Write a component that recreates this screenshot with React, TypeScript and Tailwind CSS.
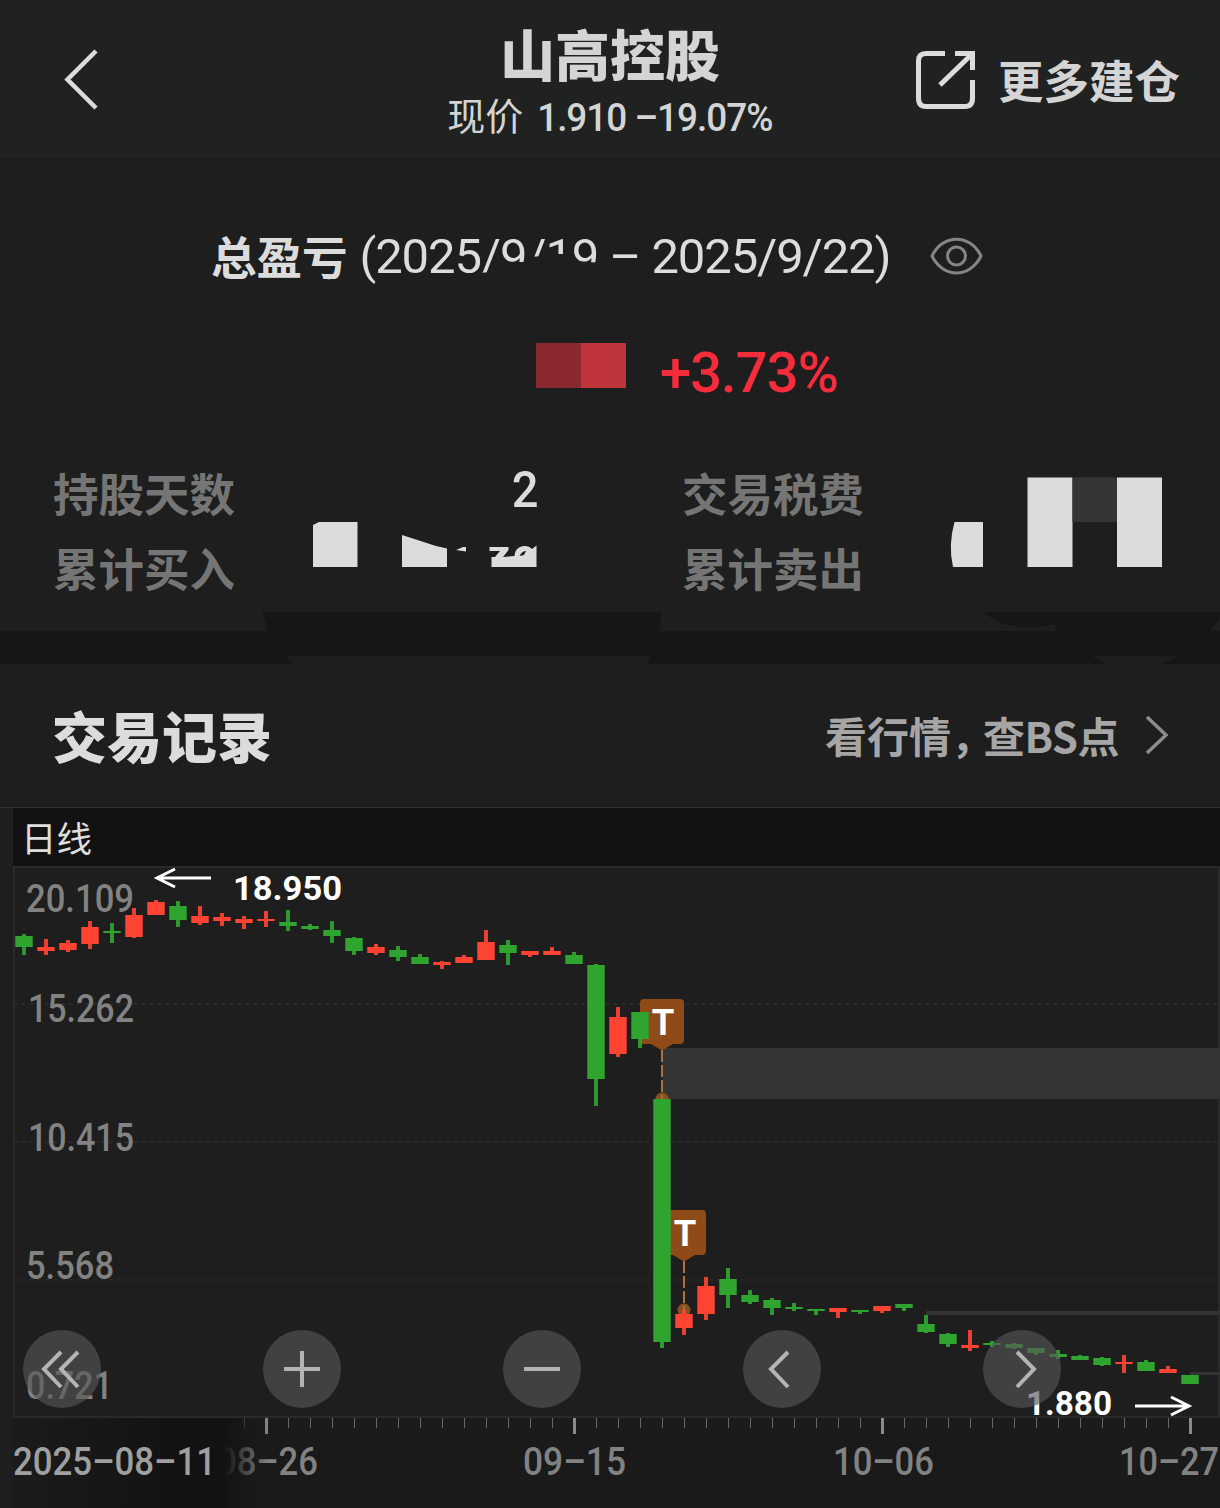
import React from 'react';

type Candle = {
  up: boolean;
  open: number;
  close: number;
  high: number;
  low: number;
};

const STEP = 22;
const FIRST_X = 24;

// [up, body top, body bottom, wick top, wick bottom] in chart pixels
const RAW: [number, number, number, number, number][] = [
  [0, 936, 947, 934, 955],
  [1, 947, 951, 939, 955],
  [1, 943, 950, 940, 952],
  [1, 927, 944, 921, 949],
  [0, 931, 933, 923, 943],
  [1, 915, 937, 908, 938],
  [1, 902, 915, 900, 915],
  [0, 906, 920, 901, 927],
  [1, 916, 923, 906, 925],
  [1, 917, 921, 913, 926],
  [1, 919, 923, 916, 929],
  [1, 919, 921, 911, 927],
  [0, 922, 926, 910, 931],
  [0, 926, 929, 924, 930],
  [0, 930, 936, 921, 943],
  [0, 938, 951, 937, 955],
  [1, 947, 953, 944, 955],
  [0, 950, 957, 946, 961],
  [0, 957, 964, 954, 964],
  [1, 962, 965, 961, 969],
  [1, 957, 963, 955, 963],
  [1, 942, 960, 930, 960],
  [0, 945, 953, 940, 965],
  [1, 951, 955, 951, 957],
  [1, 951, 955, 947, 955],
  [0, 955, 964, 952, 964],
  [0, 965, 1079, 964, 1106],
  [1, 1017, 1054, 1007, 1057],
  [0, 1012, 1039, 1012, 1048],
  [0, 1099, 1342, 1099, 1348],
  [1, 1314, 1328, 1310, 1335],
  [1, 1286, 1314, 1277, 1320],
  [0, 1279, 1295, 1268, 1308],
  [0, 1295, 1302, 1290, 1304],
  [0, 1300, 1308, 1298, 1315],
  [0, 1307, 1309, 1303, 1311],
  [0, 1309, 1311, 1309, 1315],
  [1, 1308, 1312, 1308, 1318],
  [0, 1310, 1312, 1310, 1314],
  [1, 1306, 1311, 1306, 1313],
  [0, 1304, 1308, 1304, 1311],
  [0, 1324, 1332, 1315, 1333],
  [0, 1334, 1344, 1333, 1347],
  [1, 1345, 1348, 1330, 1351],
  [0, 1343, 1345, 1341, 1347],
  [0, 1344, 1348, 1343, 1349],
  [0, 1348, 1353, 1348, 1355],
  [0, 1354, 1357, 1350, 1359],
  [0, 1356, 1360, 1355, 1360],
  [0, 1358, 1365, 1357, 1366],
  [1, 1362, 1364, 1355, 1373],
  [0, 1362, 1371, 1360, 1371],
  [1, 1369, 1373, 1366, 1373],
  [0, 1375, 1384, 1375, 1384],
];

const candles: Candle[] = RAW.map(([up, open, close, high, low]) => ({ up: up === 1, open, close, high, low }));

const priceLabels = [
  { text: '20.109', x: 26, y: 912, w: 108 },
  { text: '15.262', x: 28, y: 1022, w: 106 },
  { text: '10.415', x: 28, y: 1151, w: 106 },
  { text: '5.568', x: 26, y: 1279, w: 88 },
  { text: '0.721', x: 26, y: 1399, w: 87 },
];

const dateLabels = [
  { text: '08–26', x: 217, w: 101 },
  { text: '09–15', x: 523, w: 103 },
  { text: '10–06', x: 833, w: 101 },
  { text: '10–27', x: 1119, w: 100 },
];

const ticks = Array.from({ length: 44 }, (_, i) => i + 10);

function Marker({ x, y, dotY }: { x: number; y: number; dotY: number }) {
  return (
    <g>
      <rect x={x - 22} y={y} width="44" height="45" rx="4" fill="#8f4b17" />
      <path d={`M${x - 12} ${y + 44.5}h24l-12 7z`} fill="#8f4b17" />
      <circle cx={x} cy={dotY} r="6.5" fill="#8b5020" />
      <path d={`M${x} ${y + 51}V${dotY}`} stroke="#ab7040" strokeWidth="2" strokeDasharray="12 3" />
      <text x={x + 1} y={y + 36} textAnchor="middle" fontSize="36" fontWeight="700" fill="#fff" fontFamily="'Liberation Sans', sans-serif">T</text>
    </g>
  );
}

function Chart() {
  return (
    <svg className="block h-[700px] w-full" viewBox="0 808 1220 700" fontFamily="Roboto, sans-serif">
      <defs>
        <linearGradient id="fade" x1="0" x2="1" y1="0" y2="0">
          <stop offset="0" stopColor="#1b1b1b" />
          <stop offset="0.7" stopColor="#121212" />
          <stop offset="0.82" stopColor="#121212" />
          <stop offset="1" stopColor="#1a1a1a" stopOpacity="0" />
        </linearGradient>
      </defs>

      {/* title strip and frame */}
      <rect x="13" y="808" width="1207" height="58" fill="#121212" />
      <text x="21" y="852" fontSize="35.5" fill="#dedede" fontFamily="'Noto Sans CJK SC', sans-serif">日线</text>
      <rect x="14" y="867" width="1205" height="550" fill="none" stroke="#2a2a2a" strokeWidth="2" />
      {[1004, 1142, 1280].map(y => (
        <path key={y} d={`M13 ${y}H1220`} stroke="#292929" strokeWidth="2" strokeDasharray="4 4" />
      ))}

      {/* gaps */}
      <rect x="662" y="1048" width="558" height="51" fill="#343434" />
      <rect x="926" y="1311" width="294" height="4" fill="#343434" />
      <rect x="1190" y="1372" width="30" height="3" fill="#343434" />

      {priceLabels.map(l => (
        <text key={l.text} x={l.x} y={l.y} fontSize="39" fontWeight="500" fill="#828282" textLength={l.w} lengthAdjust="spacingAndGlyphs">{l.text}</text>
      ))}

      <Marker x={662} y={999} dotY={1099} />
      <Marker x={684} y={1210} dotY={1310} />

      {candles.map((c, i) => {
        const x = FIRST_X + i * STEP;
        return (
          <g key={i} fill={c.up ? '#ff4433' : '#2fa52f'}>
            <rect x={x - 8.7} y={c.open} width="17.4" height={c.close - c.open} />
            <rect x={x - 2} y={c.high} width="4" height={c.low - c.high} opacity="0.9" />
          </g>
        );
      })}

      {/* high and low callouts */}
      <g stroke="#fff" strokeWidth="3" fill="none">
        <path d="M211 878H157M175 869L157 878L175 887" />
        <path d="M1135 1406H1189M1171 1397L1189 1406L1171 1415" />
      </g>
      <g fill="#fff" fontSize="34" fontWeight="700">
        <text x="233" y="900" textLength="109" lengthAdjust="spacingAndGlyphs">18.950</text>
        <text x="1026" y="1415" textLength="86" lengthAdjust="spacingAndGlyphs">1.880</text>
      </g>

      {/* time axis */}
      <rect x="13" y="1418" width="1207" height="90" fill="#1a1a1a" />
      {ticks.map(i => {
        const major = (i - 11) % 14 === 0;
        return (
          <rect
            key={i}
            x={FIRST_X + i * STEP - (major ? 1 : 0)}
            y="1418"
            width={major ? 3 : 1}
            height={major ? 16 : 10}
            fill={major ? '#8a8a8a' : '#686868'}
          />
        );
      })}
      {dateLabels.map(l => (
        <text key={l.text} x={l.x} y="1475" fontSize="39" fontWeight="500" fill="#828282" textLength={l.w} lengthAdjust="spacingAndGlyphs">{l.text}</text>
      ))}
      <rect x="13" y="1418" width="257" height="90" fill="url(#fade)" />
      <text x="13" y="1475" fontSize="39" fontWeight="500" fill="#a0a0a0" textLength="203" lengthAdjust="spacingAndGlyphs">2025–08–11</text>
    </svg>
  );
}

const controls = [
  { name: 'first', d: 'M38 22L21 39L38 57M55 22L38 39L55 57' },
  { name: 'zoom in', d: 'M39 21V57M21 39H57' },
  { name: 'zoom out', d: 'M21 39H57' },
  { name: 'previous', d: 'M45 22L28 39L45 57' },
  { name: 'next', d: 'M34 22L51 39L34 57' },
];

function Header() {
  return (
    <header className="relative flex h-[159px] items-center justify-between border-b border-[#171918] bg-[#202221] pr-[40px] pl-[60px] text-[#d4d4d4]">
      <svg className="h-[64px] w-[42px]" viewBox="0 0 42 64" fill="none" stroke="#dcdcdc" strokeWidth="4.5">
        <path d="M36 4L7.500 32.500L36 61" />
      </svg>
      <div className="absolute inset-x-0 top-0 flex flex-col items-center">
        <h1 className="mt-[15px] text-[55px] leading-[74px] font-black">山高控股</h1>
        <p className="-mt-[4px] flex items-center gap-[14px] text-[38px] leading-[50px]">
          <span>现价</span>
          <span className="-mx-[8px] inline-block scale-x-[0.935] pt-[8px] font-[Roboto] text-[39.500px] font-medium tracking-[-1.100px]">1.910 –19.07%</span>
        </p>
      </div>
      <div className="flex items-center gap-[22px]">
        <svg className="mt-px h-[60px] w-[61px]" viewBox="0 0 61 60" fill="none" stroke="#dcdcdc" strokeWidth="5">
          <path d="M30 3.500H11Q3.500 3.500 3.500 11V48Q3.500 56.500 11 56.500H50Q57.500 56.500 57.500 48V30" />
          <path d="M40 3.500H57.500V20M56 5L25 35" />
        </svg>
        <span className="pt-[2px] text-[45.500px] leading-none font-bold">更多建仓</span>
      </div>
    </header>
  );
}

function Summary() {
  return (
    <section className="relative h-[472px]">
      <div className="flex h-[142px] items-center pt-[54px] pl-[211px] text-[#dcdcdc]">
        <span className="-mt-[4px] text-[45.500px] leading-[88px] font-bold">总盈亏</span>
        <span className="ml-[12px] font-[Roboto] text-[49px] leading-[88px] tracking-[-1.120px] whitespace-nowrap">(2025/9/19 – 2025/9/22)</span>
      </div>
      <svg className="absolute top-[73px] left-[928px] h-[48px] w-[57px]" viewBox="0 0 57 48" fill="none" stroke="#858585" strokeWidth="3">
        <path d="M4 24C15 1.500 42 1.500 53 24C42 46.500 15 46.500 4 24Z" />
        <circle cx="28.500" cy="24" r="9" />
      </svg>
      {/* cover over the start date */}
      <svg className="absolute top-[91px] left-[480px] h-[40px] w-[124px]" viewBox="480 250 124 40">
        <path d="M480 273L500 271L502 262H524L527 257L545 256L548 254H569L572 261L604 263V290H480Z" fill="#1e1e1e" />
      </svg>

      <div className="mt-[22px] flex h-[100px] items-center pl-[536px]">
        <div className="-mt-[15px] flex h-[45px]">
          <div className="w-[45px] bg-[#8a2a30]" />
          <div className="w-[45px] bg-[#c0343c]" />
        </div>
        <span className="ml-[34px] font-[Roboto] text-[56px] leading-none font-medium tracking-[-0.900px] text-[#f52c3c]">+3.73%</span>
      </div>

      <div className="mt-[32px] grid grid-cols-[629px_1fr] pl-[53px] text-[45.500px] leading-[75px] font-bold text-[#757575]">
        <div className="flex justify-between pr-[144px]">
          <span>持股天数</span>
          <span className="-mt-[2px] inline-block origin-right scale-x-[0.94] font-[Roboto] text-[50px] font-medium text-[#dcdcdc]">2</span>
        </div>
        <span>交易税费</span>
        <span>累计买入</span>
        <span>累计卖出</span>
      </div>

      {/* mosaic over the amounts */}
      <svg className="absolute top-[311px] left-[300px] h-[120px] w-[870px]" viewBox="300 470 870 120" fill="#dcdcdc">
        <path d="M313 525L319 522H357.500V567H313Z" />
        <path d="M402 535L436 546L447 548.500V567H402Z" />
        <path d="M456 550L463 547H466V551.500Z" />
        <path d="M489.500 547H508.500V550L503 557L514.500 556C515 548 521 546 525 546C528 546 530 547 532 549L536.500 545.500V567H491.500V557H495L500 551H489.500Z" />
        <path d="M519.500 556Q522 551 526 551L524 555Z" fill="#1e1e1e" />
        <path d="M954.500 522H983V567H953Q948 545 954.500 522Z" />
        <path d="M1027.500 477.500H1072.500V567H1027.500ZM1117 477.500H1162V567H1117Z" />
        <path d="M1072.500 477.500H1117V522H1072.500Z" fill="#353535" />
      </svg>
    </section>
  );
}

export default function App() {
  return (
    <div className="h-[1508px] w-[1220px] overflow-hidden bg-[#1e1e1e] font-['Noto_Sans_CJK_SC',sans-serif]">
      <Header />
      <Summary />
      <div className="relative h-[33px] bg-[#161616]">
        <svg className="absolute top-[-19px] left-0 h-[52px] w-[1220px]" viewBox="0 612 1220 52">
          <path d="M262.500 612H661L660 632H268Z" fill="#161616" />
          <path d="M983 612H1220V617L1209 632H1059L1053.500 624Q1012 635 983 612Z" fill="#161616" />
          <path d="M285 656H650.500L646.500 664H294ZM1091.500 656H1178L1162 664H1107Z" fill="#1e1e1e" />
        </svg>
      </div>

      <section className="flex h-[144px] items-center justify-between border-b border-[#333333] pr-[49px] pb-[2px] pl-[52px]">
        <h2 className="text-[55px] leading-none font-black text-[#dcdcdc]">交易记录</h2>
        <div className="flex items-center text-[42px] leading-none font-bold text-[#a6a6a6]">
          <span>看行情</span>
          <span className="tracking-[-10px]">，</span>
          <span className="tracking-[-0.500px]">查BS点</span>
          <svg className="ml-[24px] h-[42px] w-[28px]" viewBox="0 0 28 42" fill="none" stroke="#8c8c8c" strokeWidth="3.500">
            <path d="M4 3L23 21L4 39" />
          </svg>
        </div>
      </section>

      <section className="relative">
        <Chart />
        <div className="absolute top-[522px] left-[23px] flex gap-[162px]">
          {controls.map(c => (
            <button key={c.name} aria-label={c.name} className="size-[78px] rounded-full bg-[#565656]/64">
              <svg className="size-[78px]" viewBox="0 0 78 78" fill="none" stroke="#b4b4b4" strokeWidth="4">
                <path d={c.d} />
              </svg>
            </button>
          ))}
        </div>
      </section>
    </div>
  );
}
